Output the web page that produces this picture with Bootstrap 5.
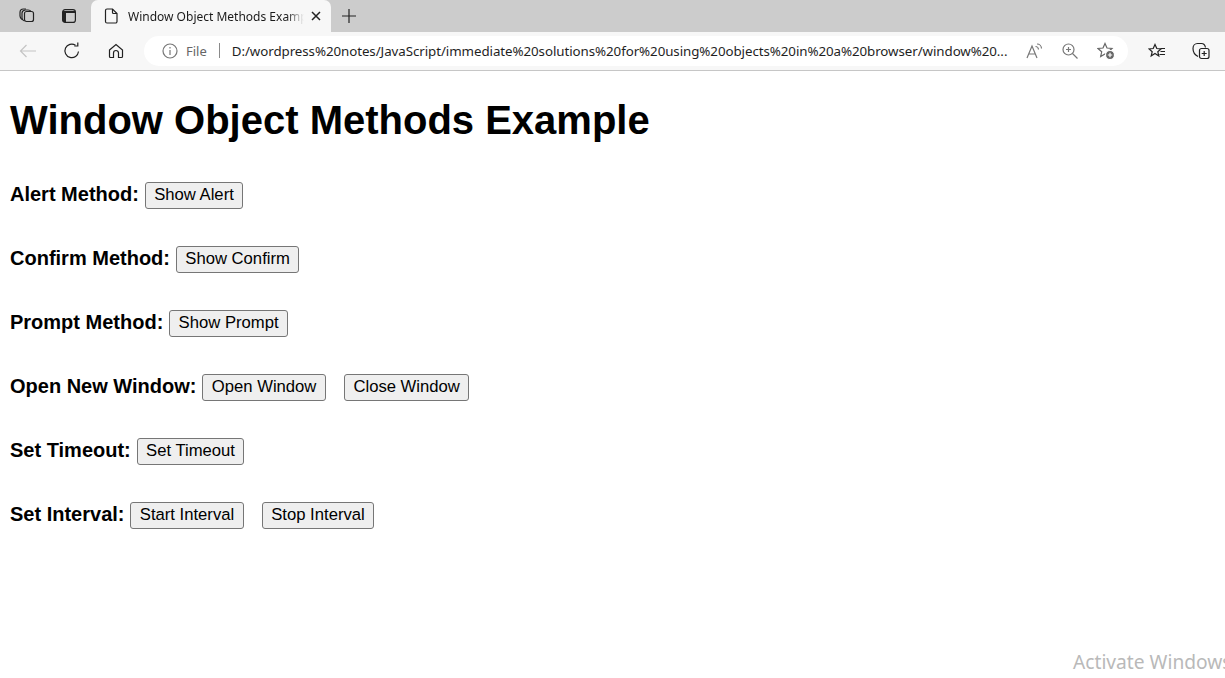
<!DOCTYPE html>
<html lang="en">
<head>
  <meta charset="UTF-8" />
  <meta name="viewport" content="width=device-width, initial-scale=1" />
  <title>Window Object Methods Example</title>
  <link href="https://cdn.jsdelivr.net/npm/bootstrap@5.3.0/dist/css/bootstrap.min.css" rel="stylesheet" />
  <style>
    html, body { height: 100%; overflow: hidden; background: #fff; }
    body { font-family: "Liberation Sans", Arial, sans-serif; color: #000; }
    svg { display: block; flex: none; fill: none; stroke: #222; stroke-width: 1.2; }

    .tab-strip { height: 32px; background: #cccccc; }
    .strip-btn { width: 42px; flex: none; }
    .strip-btn-first { margin-left: 6px; }
    .page-tab { width: 240px; height: 32px; background: #f7f7f7; border-radius: 7px 7px 0 0; margin-left: 1px; padding: 0 10px 0 13px; }
    .page-tab-title { font: 12px "Noto Sans", sans-serif; color: #1a1a1a; width: 176px; margin-left: 10px; white-space: nowrap; overflow: hidden;
      -webkit-mask-image: linear-gradient(to right, #000 90%, transparent); mask-image: linear-gradient(to right, #000 90%, transparent); }
    .new-tab { margin-left: 10px; }

    .tool-bar { height: 39px; background: #f7f7f7; border-bottom: 1px solid #c6c6c6; padding-bottom: 1px; }
    .tool-btn { width: 44px; flex: none; }
    .tool-btn-first { margin-left: 6px; }
    .tool-btn-after { margin-left: 7px; }
    .addr-pill { width: 984px; height: 30px; margin-left: 6px; background: #fff; border-radius: 15px; padding-left: 18px; }
    .addr-file { font: 13px "Noto Sans", sans-serif; color: #666; margin-left: 8px; }
    .addr-sep { width: 1px; height: 15px; background: #8a8a8a; margin: 0 12px 0 12px; }
    .addr-url { font: 13.33px "Noto Sans", sans-serif; color: #1f1f1f; width: 776px; white-space: nowrap; overflow: hidden; letter-spacing: -.07px; }
    .addr-icons { margin-left: 18px; gap: 19px; }

    .page-body { padding: 0 10px; }
    .page-title { font-size: 40px; line-height: 46px; font-weight: 700; margin: 26px 0 39px; }
    .method-row { height: 27px; margin-bottom: 37px; }
    .method-name { font-size: 20px; font-weight: 700; line-height: 27px; margin-right: 5.8px; position: relative; top: -1px; }
    .plain-btn { height: 27px; padding: 0 8.5px 2px; font-size: 16.67px; line-height: 23px; color: #000; background: #efefef; border: 1px solid #767676; border-radius: 3px; }
    .plain-btn + .plain-btn { margin-left: 18px; }

    .win-mark { position: absolute; left: 1073px; top: 648px; font: 19.2px "Noto Sans", sans-serif; color: #b9b9b9; white-space: nowrap; }
  </style>
</head>
<body>
  <div class="tab-strip d-flex align-items-center">
    <div class="strip-btn strip-btn-first d-flex justify-content-center">
      <svg width="18" height="18" viewBox="0 0 18 18"><rect x="6.5" y="4.5" width="9" height="10" rx="2"/><path d="M6.500 14c-1.500-.5-2.500-1.500-2.500-3V6c0-1.500 1-2.500 3-3h3c1.500 0 2.500.5 3 1.500"/><path d="M4 12.500C2.800 11.500 2 10.500 2 9V5.500C2 3.500 3.500 2 5.500 2H8"/></svg>
    </div>
    <div class="strip-btn d-flex justify-content-center">
      <svg width="16" height="16" viewBox="0 0 16 16"><rect x="1.600" y="1.600" width="12.800" height="12.800" rx="2.500"/><path d="M2 3h12v2H5v9H2z" fill="#222" stroke="none"/></svg>
    </div>
    <div class="page-tab d-flex align-items-center">
      <svg width="14" height="16" viewBox="0 0 14 16"><path d="M2.500 1h5.500l4.500 4.500v8a1.500 1.500 0 0 1-1.500 1.500h-8.500a1.500 1.500 0 0 1-1.500-1.500V2.500A1.500 1.500 0 0 1 2.500 1z" transform="translate(.5 0)"/><path d="M8.500 1v3.500a1 1 0 0 0 1 1H13"/></svg>
      <span class="page-tab-title">Window Object Methods Example</span>
      <svg class="ms-auto" width="10" height="10" viewBox="0 0 10 10"><path d="M1 1l8 8M9 1l-8 8" stroke-width="1.500"/></svg>
    </div>
    <svg class="new-tab" width="16" height="16" viewBox="0 0 16 16"><path d="M8 1v14M1 8h14"/></svg>
  </div>

  <div class="tool-bar d-flex align-items-center">
    <div class="tool-btn tool-btn-first d-flex justify-content-center">
      <svg width="18" height="14" viewBox="0 0 18 14" style="stroke:#c4c4c4"><path d="M17 7H1.500M7.500 1L1.500 7l6 6"/></svg>
    </div>
    <div class="tool-btn d-flex justify-content-center">
      <svg width="18" height="18" viewBox="0 0 18 18"><path d="M15.500 9.500A6.800 6.800 0 1 1 12.500 3.200"/><path d="M12.800 .5v3.500H9.300" transform="translate(2 0)"/></svg>
    </div>
    <div class="tool-btn d-flex justify-content-center">
      <svg width="16" height="16" viewBox="0 0 16 16"><path d="M1.500 7L8 1.500 14.500 7v6.500a1 1 0 0 1-1 1H10.500V10a2.500 2.500 0 0 0-5 0v4.500H2.500a1 1 0 0 1-1-1z"/></svg>
    </div>
    <div class="addr-pill d-flex align-items-center">
      <svg width="16" height="16" viewBox="0 0 16 16" style="stroke:#777"><circle cx="8" cy="8" r="7"/><path d="M8 7v5M8 4v1.500"/></svg>
      <span class="addr-file">File</span>
      <span class="addr-sep"></span>
      <span class="addr-url">D:/wordpress%20notes/JavaScript/immediate%20solutions%20for%20using%20objects%20in%20a%20browser/window%20...</span>
      <div class="addr-icons d-flex align-items-center">
        <svg width="17" height="16" viewBox="0 0 17 16" style="stroke:#777"><path d="M1 15L6 3l5 12M3 11h6"/><path d="M9.500 3.500c1.500 0 3 1.500 3 3M11 1c2.500 0 4.500 2 4.500 4.500"/></svg>
        <svg width="16" height="16" viewBox="0 0 16 16" style="stroke:#777"><circle cx="6.500" cy="6.500" r="5.500"/><path d="M10.500 10.500l5 5M6.500 4v5M4 6.500h5"/></svg>
        <svg width="18" height="18" viewBox="0 0 18 18" style="stroke:#666"><path d="M8 1.500l2 4.500 5 .5-3.700 3.300 1 4.700L8 12l-4.300 2.500 1-4.700L1 6.500 6 6z"/><circle cx="13" cy="13" r="4.500" fill="#666" stroke="#fff"/><path d="M13 10.800v4.400M10.800 13h4.400" stroke="#fff"/></svg>
      </div>
    </div>
    <div class="tool-btn tool-btn-after d-flex justify-content-center">
      <svg width="18" height="16" viewBox="0 0 18 16"><path d="M7 1.500l1.800 4 4.200.4-3.200 2.800 1 4.300L7 10.500l-3.800 2.500 1-4.300L1 5.900l4.200-.4z"/><path d="M12.500 5.500h4.500M12.500 8.500h4.500M11.500 11.500h5.500"/></svg>
    </div>
    <div class="tool-btn d-flex justify-content-center">
      <svg width="18" height="18" viewBox="0 0 18 18"><rect x="7.500" y="6.500" width="9.500" height="10" rx="2"/><path d="M12.200 9v5M9.700 11.500h5"/><path d="M6 14.500C3 13 1 10.500 1 6.500 1 3.500 3 1.500 5.500 1.500h4c2 0 3.500 1.500 4 4"/></svg>
    </div>
  </div>

  <div class="page-body">
    <h1 class="page-title">Window Object Methods Example</h1>
    <div class="method-row d-flex align-items-center"><span class="method-name">Alert Method:</span><button type="button" class="plain-btn">Show Alert</button></div>
    <div class="method-row d-flex align-items-center"><span class="method-name">Confirm Method:</span><button type="button" class="plain-btn">Show Confirm</button></div>
    <div class="method-row d-flex align-items-center"><span class="method-name">Prompt Method:</span><button type="button" class="plain-btn">Show Prompt</button></div>
    <div class="method-row d-flex align-items-center"><span class="method-name">Open New Window:</span><button type="button" class="plain-btn">Open Window</button><button type="button" class="plain-btn">Close Window</button></div>
    <div class="method-row d-flex align-items-center"><span class="method-name">Set Timeout:</span><button type="button" class="plain-btn">Set Timeout</button></div>
    <div class="method-row d-flex align-items-center"><span class="method-name">Set Interval:</span><button type="button" class="plain-btn">Start Interval</button><button type="button" class="plain-btn">Stop Interval</button></div>
  </div>

  <div class="win-mark">Activate Windows</div>

  <script src="https://cdn.jsdelivr.net/npm/bootstrap@5.3.0/dist/js/bootstrap.bundle.min.js"></script>
</body>
</html>
